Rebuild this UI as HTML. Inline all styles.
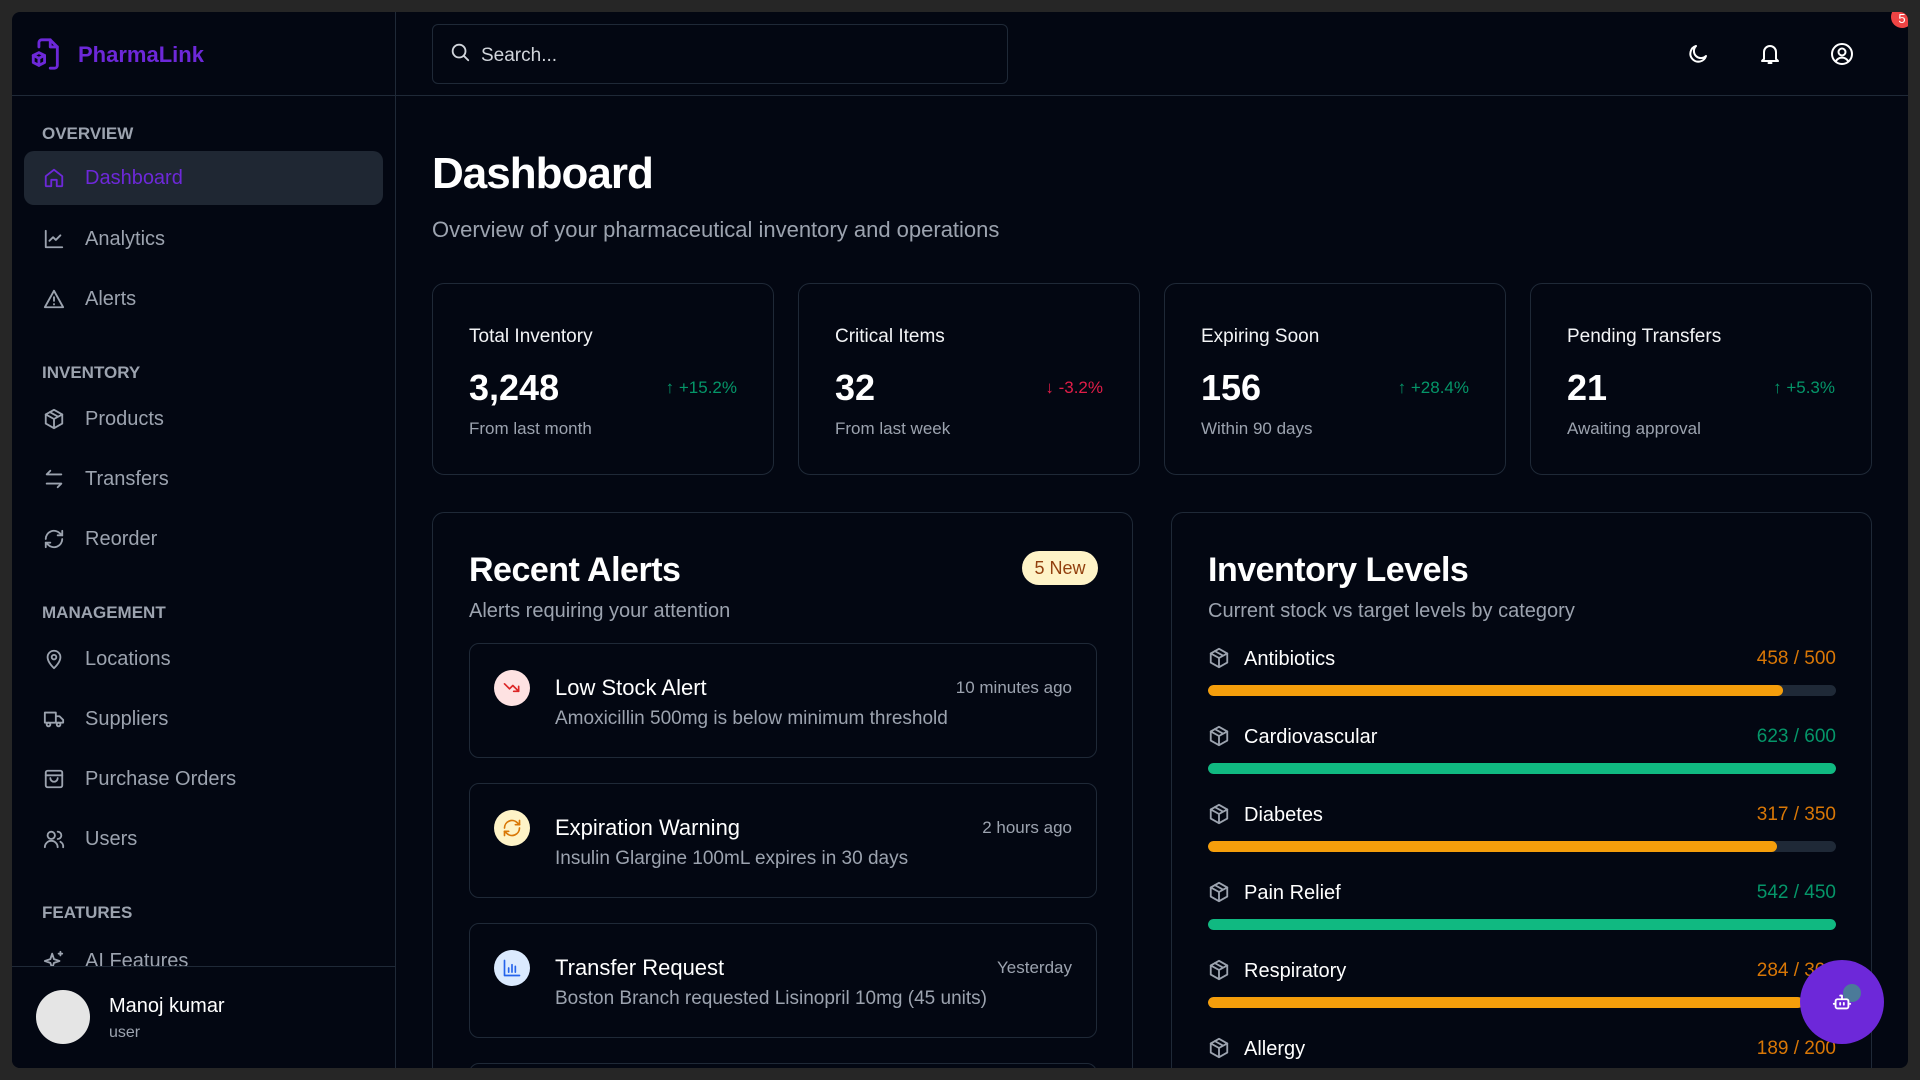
<!DOCTYPE html>
<html><head><meta charset="utf-8"><style>
*{box-sizing:border-box;margin:0;padding:0}
body{width:1920px;height:1080px;background:#262626;font-family:"Liberation Sans",sans-serif;overflow:hidden;position:relative}
.app{position:absolute;left:12px;top:12px;width:1896px;height:1056px;background:#030712;border-radius:8px;overflow:hidden}
.a{position:absolute}
.sb{left:0;top:0;width:384px;height:1056px;border-right:1px solid #1f2937}
.lbl{position:absolute;left:30px;font-size:17px;font-weight:bold;color:#9ca3af;transform:translateY(-50%)}
.it{position:absolute;left:12px;width:359px;height:54px;border-radius:10px;display:flex;align-items:center;padding-left:19px;color:#9ca3af;font-size:20px}
.it svg{width:22px;height:22px;margin-right:20px;flex:none}
.it.on{background:#1f2733;color:#6d28d9}
svg{fill:none;stroke:currentColor;stroke-width:2;stroke-linecap:round;stroke-linejoin:round}
.card{position:absolute;top:271px;width:342px;height:192px;border:1px solid #1f2937;border-radius:12px}
.card .t{position:absolute;left:36px;top:42px;font-size:19px;color:#f3f4f6}
.card .n{position:absolute;left:36px;top:83px;font-size:36px;font-weight:bold;color:#fff}
.card .s{position:absolute;left:36px;top:135px;font-size:17px;color:#9ca3af}
.card .c{position:absolute;right:36px;top:94px;font-size:17px}
.panel{position:absolute;top:500px;height:556px;border:1px solid #1f2937;border-bottom:none;border-radius:12px 12px 0 0}
.ptitle{position:absolute;left:36px;top:38px;font-size:34px;font-weight:bold;color:#fff;letter-spacing:-0.5px}
.psub{position:absolute;left:36px;top:87px;font-size:20px;color:#9ca3af}
.al{position:absolute;left:36px;width:628px;height:115px;border:1px solid #1f2937;border-radius:10px}
.al .ic{position:absolute;left:24px;top:26px;width:36px;height:36px;border-radius:50%;display:flex;align-items:center;justify-content:center}
.al .ic svg{width:20px;height:20px}
.al .h{position:absolute;left:85px;top:31px;font-size:22px;color:#fff}
.al .d{position:absolute;left:85px;top:64px;font-size:19px;color:#9ca3af}
.al .tm{position:absolute;right:24px;top:34px;font-size:17px;color:#9ca3af}
.row{position:absolute;left:36px;width:628px;height:50px}
.row svg{position:absolute;left:0;top:-1px;width:22px;height:22px;color:#9ca3af}
.row .nm{position:absolute;left:36px;top:0;font-size:20px;color:#fff}
.row .v{position:absolute;right:0;top:0;font-size:19px}
.bar{position:absolute;left:0;top:37px;width:628px;height:11px;border-radius:6px;background:#1f2937;overflow:hidden}
.bar i{display:block;height:100%;border-radius:6px}
.hi{color:#fff;width:24px;height:24px}
</style></head><body>
<div class="app">
 <div class="a sb">
  <div class="a" style="left:0;top:0;width:384px;height:84px;border-bottom:1px solid #1f2937"></div>
  <svg class="a" style="left:17px;top:24px;width:34px;height:36px;color:#6d28d9" viewBox="0 0 24 24"><path d="M7 7V4a2 2 0 0 1 2-2h6l5 5v13a2 2 0 0 1-2 2h-3"/><path d="M15 2v5h5"/><path d="M7 11l4 2v5l-4 2-4-2v-5z"/><path d="M3 13l4 2 4-2M7 15v5"/></svg>
  <div class="a" style="left:66px;top:30px;font-size:22px;font-weight:bold;color:#6d28d9">PharmaLink</div>
  <div class="lbl" style="top:122px">OVERVIEW</div>
  <div class="it on" style="top:139px"><svg viewBox="0 0 24 24"><path d="M3 10l9-7 9 7v10a1 1 0 0 1-1 1h-5v-7H9v7H4a1 1 0 0 1-1-1z"/></svg>Dashboard</div>
  <div class="it" style="top:200px"><svg viewBox="0 0 24 24"><path d="M3 3v18h18"/><path d="M7 14l4-4 3 3 5-5"/></svg>Analytics</div>
  <div class="it" style="top:260px"><svg viewBox="0 0 24 24"><path d="M12 3l10 18H2z"/><path d="M12 10v4M12 17.5v.5"/></svg>Alerts</div>
  <div class="lbl" style="top:361px">INVENTORY</div>
  <div class="it" style="top:380px"><svg viewBox="0 0 24 24"><path d="M12 2l9 5v10l-9 5-9-5V7z"/><path d="M3 7l9 5 9-5M12 12v10M7.5 4.5l9 5"/></svg>Products</div>
  <div class="it" style="top:440px"><svg viewBox="0 0 24 24"><path d="M20 7H4l4-4M4 17h16l-4 4"/></svg>Transfers</div>
  <div class="it" style="top:500px"><svg viewBox="0 0 24 24"><path d="M21 12a9 9 0 0 1-15.5 6.2L3 16M3 12a9 9 0 0 1 15.5-6.2L21 8"/><path d="M21 3v5h-5M3 21v-5h5"/></svg>Reorder</div>
  <div class="lbl" style="top:601px">MANAGEMENT</div>
  <div class="it" style="top:620px"><svg viewBox="0 0 24 24"><path d="M12 22s7-6 7-12a7 7 0 0 0-14 0c0 6 7 12 7 12z"/><circle cx="12" cy="10" r="2.5"/></svg>Locations</div>
  <div class="it" style="top:680px"><svg viewBox="0 0 24 24"><path d="M2 5h12v11H2zM14 9h4l4 4v3h-8"/><circle cx="6" cy="18" r="2"/><circle cx="17" cy="18" r="2"/></svg>Suppliers</div>
  <div class="it" style="top:740px"><svg viewBox="0 0 24 24"><rect x="3" y="3" width="18" height="18" rx="2"/><path d="M3 8h18M8 11a4 4 0 0 0 8 0"/></svg>Purchase Orders</div>
  <div class="it" style="top:800px"><svg viewBox="0 0 24 24"><circle cx="9" cy="8" r="4"/><path d="M2 21a7 7 0 0 1 14 0M16 4a4 4 0 0 1 0 8M19 15a6 6 0 0 1 3 6"/></svg>Users</div>
  <div class="lbl" style="top:901px">FEATURES</div>
  <div class="it" style="top:922px;height:54px"><svg viewBox="0 0 24 24"><path d="M10 4l2 6 6 2-6 2-2 6-2-6-6-2 6-2zM19 2v4M17 4h4"/></svg>AI Features</div>
  <div class="a" style="left:0;top:954px;width:383px;height:102px;background:#030712;border-top:1px solid #1f2937">
   <div class="a" style="left:24px;top:23px;width:54px;height:54px;border-radius:50%;background:#e5e5e5"></div>
   <div class="a" style="left:97px;top:28px;font-size:20px;color:#fff">Manoj kumar</div>
   <div class="a" style="left:97px;top:57px;font-size:16px;color:#9ca3af">user</div>
  </div>
 </div>
 <div class="a" style="left:384px;top:0;width:1512px;height:84px;border-bottom:1px solid #1f2937"></div>
 <div class="a" style="left:420px;top:12px;width:576px;height:60px;border:1px solid #1f2937;border-radius:6px">
  <svg class="a" style="left:16px;top:16px;width:22px;height:22px;color:#d1d5db" viewBox="0 0 24 24"><circle cx="11" cy="11" r="7"/><path d="M21 21l-5-5"/></svg>
  <div class="a" style="left:48px;top:20px;font-size:19px;color:#d1d5db">Search...</div>
 </div>
 <svg class="a hi" style="left:1674px;top:30px" viewBox="0 0 24 24"><path d="M20 14A8 8 0 1 1 10 4a6 6 0 0 0 10 10z"/></svg>
 <svg class="a hi" style="left:1746px;top:30px" viewBox="0 0 24 24"><path d="M6 17V10a6 6 0 0 1 12 0v7l2 2H4z"/><path d="M10.5 21h3"/></svg>
 <svg class="a hi" style="left:1818px;top:30px" viewBox="0 0 24 24"><circle cx="12" cy="12" r="10"/><circle cx="12" cy="10" r="3.5"/><path d="M6 19a7 7 0 0 1 12 0"/></svg>
 <div class="a" style="left:1879px;top:-6px;width:22px;height:22px;border-radius:50%;background:#ef4444;color:#fff;font-size:13px;text-align:center;line-height:26px">5</div>

 <div class="a" style="left:420px;top:137px;font-size:44px;font-weight:bold;color:#fff;letter-spacing:-1px">Dashboard</div>
 <div class="a" style="left:420px;top:205px;font-size:22px;color:#9ca3af">Overview of your pharmaceutical inventory and operations</div>

 <div class="card" style="left:420px"><div class="t">Total Inventory</div><div class="n">3,248</div><div class="s">From last month</div><div class="c" style="color:#059669">↑ +15.2%</div></div>
 <div class="card" style="left:786px"><div class="t">Critical Items</div><div class="n">32</div><div class="s">From last week</div><div class="c" style="color:#e11d48">↓ -3.2%</div></div>
 <div class="card" style="left:1152px"><div class="t">Expiring Soon</div><div class="n">156</div><div class="s">Within 90 days</div><div class="c" style="color:#059669">↑ +28.4%</div></div>
 <div class="card" style="left:1518px"><div class="t">Pending Transfers</div><div class="n">21</div><div class="s">Awaiting approval</div><div class="c" style="color:#059669">↑ +5.3%</div></div>

 <div class="panel" style="left:420px;width:701px">
  <div class="ptitle">Recent Alerts</div>
  <div class="psub">Alerts requiring your attention</div>
  <div class="a" style="left:589px;top:38px;width:76px;height:34px;border-radius:17px;background:#fef3c7;color:#92400e;font-size:18px;text-align:center;line-height:34px">5 New</div>
  <div class="al" style="top:130px"><div class="ic" style="background:#fee2e2;color:#dc2626"><svg viewBox="0 0 24 24"><path d="M3 7l6 6 4-4 7 7M20 10v6h-6"/></svg></div><div class="h">Low Stock Alert</div><div class="d">Amoxicillin 500mg is below minimum threshold</div><div class="tm">10 minutes ago</div></div>
  <div class="al" style="top:270px"><div class="ic" style="background:#fef3c7;color:#d97706"><svg viewBox="0 0 24 24"><path d="M21 12a9 9 0 0 1-15.5 6.2L3 16M3 12a9 9 0 0 1 15.5-6.2L21 8"/><path d="M21 3v5h-5M3 21v-5h5"/></svg></div><div class="h">Expiration Warning</div><div class="d">Insulin Glargine 100mL expires in 30 days</div><div class="tm">2 hours ago</div></div>
  <div class="al" style="top:410px"><div class="ic" style="background:#dbeafe;color:#2563eb"><svg viewBox="0 0 24 24"><path d="M3 3v18h18M8 17v-5M12 17V8M16 17v-7"/></svg></div><div class="h">Transfer Request</div><div class="d">Boston Branch requested Lisinopril 10mg (45 units)</div><div class="tm">Yesterday</div></div>
  <div class="al" style="top:550px;height:40px"></div>
 </div>

 <div class="panel" style="left:1159px;width:701px">
  <div class="ptitle">Inventory Levels</div>
  <div class="psub">Current stock vs target levels by category</div>
  <div class="row" style="top:135px"><svg viewBox="0 0 24 24"><path d="M12 2l9 5v10l-9 5-9-5V7z"/><path d="M3 7l9 5 9-5M12 12v10M7.5 4.5l9 5"/></svg><div class="nm">Antibiotics</div><div class="v" style="color:#d97706">458 / 500</div><div class="bar"><i style="width:91.6%;background:#f59e0b"></i></div></div>
  <div class="row" style="top:213px"><svg viewBox="0 0 24 24"><path d="M12 2l9 5v10l-9 5-9-5V7z"/><path d="M3 7l9 5 9-5M12 12v10M7.5 4.5l9 5"/></svg><div class="nm">Cardiovascular</div><div class="v" style="color:#059669">623 / 600</div><div class="bar"><i style="width:100%;background:#10b981"></i></div></div>
  <div class="row" style="top:291px"><svg viewBox="0 0 24 24"><path d="M12 2l9 5v10l-9 5-9-5V7z"/><path d="M3 7l9 5 9-5M12 12v10M7.5 4.5l9 5"/></svg><div class="nm">Diabetes</div><div class="v" style="color:#d97706">317 / 350</div><div class="bar"><i style="width:90.6%;background:#f59e0b"></i></div></div>
  <div class="row" style="top:369px"><svg viewBox="0 0 24 24"><path d="M12 2l9 5v10l-9 5-9-5V7z"/><path d="M3 7l9 5 9-5M12 12v10M7.5 4.5l9 5"/></svg><div class="nm">Pain Relief</div><div class="v" style="color:#059669">542 / 450</div><div class="bar"><i style="width:100%;background:#10b981"></i></div></div>
  <div class="row" style="top:447px"><svg viewBox="0 0 24 24"><path d="M12 2l9 5v10l-9 5-9-5V7z"/><path d="M3 7l9 5 9-5M12 12v10M7.5 4.5l9 5"/></svg><div class="nm">Respiratory</div><div class="v" style="color:#d97706">284 / 300</div><div class="bar"><i style="width:94.7%;background:#f59e0b"></i></div></div>
  <div class="row" style="top:525px;height:30px"><svg viewBox="0 0 24 24"><path d="M12 2l9 5v10l-9 5-9-5V7z"/><path d="M3 7l9 5 9-5M12 12v10M7.5 4.5l9 5"/></svg><div class="nm">Allergy</div><div class="v" style="color:#d97706">189 / 200</div></div>
 </div>

 <div class="a" style="left:1788px;top:948px;width:84px;height:84px;border-radius:50%;background:#6d28d9">
  <div class="a" style="left:43px;top:24px;width:18px;height:18px;border-radius:50%;background:#4b7a99"></div>
  <svg class="a" style="left:31px;top:31px;width:22px;height:22px;color:#fff" viewBox="0 0 24 24"><rect x="5" y="9" width="14" height="10" rx="2"/><path d="M12 9V5h-2M3 14h2M19 14h2M10 13v2M14 13v2"/></svg>
 </div>
</div>
</body></html>
